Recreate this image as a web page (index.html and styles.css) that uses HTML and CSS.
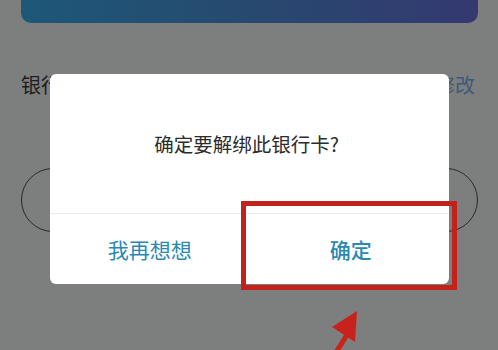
FILE: index.html
```html
<!DOCTYPE html>
<html lang="zh">
<head>
<meta charset="utf-8">
<link rel="stylesheet" href="styles.css">
</head>
<body>
<div class="page">
  <div class="card"></div>
  <div class="row">
    <span class="label">银行卡</span>
    <span class="edit">修改</span>
  </div>
  <div class="pill"></div>
</div>

<div class="dialog">
  <div class="dialog-body">确定要解绑此银行卡?</div>
  <div class="dialog-actions">
    <div class="btn">我再想想</div>
    <div class="btn btn-ok">确定</div>
  </div>
</div>

<div class="highlight"></div>
<svg class="arrow" width="60" height="50" viewBox="0 0 60 50">
  <path d="M28 52 L48 20" stroke="#c8221c" stroke-width="5" fill="none"/>
  <path d="M55 1 L30 17 L53 32 Z" fill="#c8221c"/>
</svg>
</body>
</html>
```

FILE: styles.css
```css
html, body {
  margin: 0;
  padding: 0;
}
body {
  width: 498px;
  height: 350px;
  overflow: hidden;
  background: #7d7e7e;
  font-family: "Noto Sans CJK SC", "Noto Sans", sans-serif;
  position: relative;
}
.page {
  padding: 0 20px 0 21px;
  display: flex;
  flex-direction: column;
}
.card {
  height: 23px;
  border-radius: 0 0 10px 10px;
  background: linear-gradient(90deg, #1d5878 0%, #27496f 50%, #343970 100%);
}
.row {
  display: flex;
  justify-content: space-between;
  align-items: center;
  margin-top: 50px;
  height: 24px;
  font-size: 20px;
  line-height: 24px;
}
.label {
  color: #1e1e1e;
}
.edit {
  color: #3e5a78;
  margin-right: 3px;
}
.pill {
  margin-top: 71px;
  height: 62px;
  border: 1px solid #2a2a2a;
  border-radius: 33px;
}
.dialog {
  position: absolute;
  left: 50px;
  top: 74px;
  width: 399px;
  height: 210px;
  background: #fff;
  border-radius: 6px;
  display: flex;
  flex-direction: column;
}
.dialog-body {
  height: 139px;
  display: flex;
  align-items: center;
  justify-content: center;
  font-size: 19.5px;
  color: #2c2c2c;
  padding-right: 6px;
  border-bottom: 1px solid #ececec;
}
.dialog-actions {
  flex: 1;
  display: grid;
  grid-template-columns: 1fr 1fr;
}
.btn {
  display: flex;
  align-items: center;
  justify-content: center;
  font-size: 21px;
  color: #2a89b3;
  padding-bottom: 1px;
}
.btn-ok {
  font-weight: 500;
  padding-left: 3px;
}
.highlight {
  position: absolute;
  left: 241px;
  top: 201px;
  width: 216px;
  height: 89px;
  box-sizing: border-box;
  border: 5px solid #c3211b;
}
.arrow {
  position: absolute;
  left: 302px;
  top: 310px;
}
```
